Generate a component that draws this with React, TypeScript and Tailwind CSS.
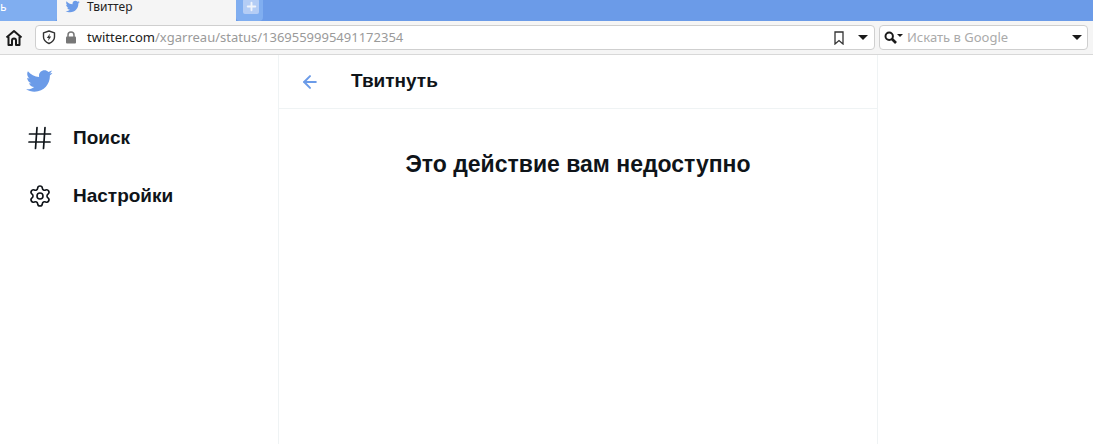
import { ArrowLeft, Settings, Plus } from "lucide-react";

const birdPath =
  "M23.643 4.937c-.835.37-1.732.62-2.675.733.962-.576 1.7-1.49 2.048-2.578-.9.534-1.897.922-2.958 1.13-.85-.904-2.06-1.47-3.4-1.47-2.572 0-4.658 2.086-4.658 4.66 0 .364.042.718.12 1.06-3.873-.195-7.304-2.05-9.602-4.868-.4.69-.63 1.49-.63 2.342 0 1.616.823 3.043 2.072 3.878-.764-.025-1.482-.234-2.11-.583v.06c0 2.257 1.605 4.14 3.737 4.568-.392.106-.803.162-1.227.162-.3 0-.593-.028-.877-.082.593 1.85 2.313 3.198 4.352 3.234-1.595 1.25-3.604 1.995-5.786 1.995-.376 0-.747-.022-1.112-.065 2.062 1.323 4.51 2.093 7.14 2.093 8.57 0 13.255-7.098 13.255-13.254 0-.2-.005-.402-.014-.602.91-.658 1.7-1.477 2.323-2.41z";

function Bird({ className }: { className: string }) {
  return (
    <svg viewBox="0 0 24 24" className={className} fill="currentColor">
      <path d={birdPath} />
    </svg>
  );
}

function Caret() {
  return <span className="block w-0 h-0 border-x-[5px] border-x-transparent border-t-[5px] border-t-[#1a1a1a] shrink-0" />;
}

function TabBar() {
  return (
    <div className="h-[21px] bg-[#6b9be8] flex font-['Noto_Sans',sans-serif] overflow-hidden shrink-0">
      <div className="w-[57px] bg-[#80aef0] text-white text-[12px] leading-[13px] rounded-br-[3px] overflow-hidden">ь</div>
      <div className="w-[179px] bg-[#f5f5f5] flex items-start pl-[8px] gap-[7px]">
        <Bird className="w-[15px] h-[15px] text-[#6b9be8] -mt-[1px]" />
        <span className="text-[12px] leading-[14px] text-[#222]">Твиттер</span>
      </div>
      <div className="w-[27px] bg-[#80aef0] rounded-b-[4px] flex items-start pl-[7px]">
        <span className="w-[16px] h-[15px] -mt-px bg-[#b4cdf5] rounded-[2px] flex items-center justify-center">
          <Plus className="w-[13px] h-[13px] text-[#f0f4fb]" strokeWidth={3.5} />
        </span>
      </div>
    </div>
  );
}

function Toolbar() {
  return (
    <div className="h-[34px] bg-[#f5f5f5] border-b border-[#d8d8d8] flex items-center pl-[5px] pr-[5px] font-['Noto_Sans',sans-serif] shrink-0">
      <svg viewBox="0 0 18 18" className="w-[18px] h-[18px] text-[#1a1a1a] mr-[12px]" fill="none" stroke="currentColor" strokeWidth={2} strokeLinejoin="round">
        <path d="M1.5 8.5 9 2l7.500 6.500" />
        <path d="M3.500 7.500V16H7v-4.500a2 2 0 0 1 4 0V16h3.500V7.500" />
      </svg>
      <div className="w-[840px] h-[25px] bg-white border border-[#cfcfcf] rounded-[4px] flex items-center pl-[6px] pr-[6px]">
        <svg viewBox="0 0 14 15" className="w-[14px] h-[15px] mr-[9px]" fill="none">
          <path d="M7 1 1.500 2.800v4.200c0 3.200 2.400 5.200 5.500 6.500 3.100-1.300 5.500-3.300 5.500-6.500V2.800z" stroke="#333" strokeWidth={1.400} strokeLinejoin="round" />
          <path d="M8 3.500 4.800 8h1.900L6 11l3.200-4.500H7.300z" fill="#333" />
        </svg>
        <svg viewBox="0 0 12 13" className="w-[12px] h-[13px] mr-[10px]" fill="none">
          <path d="M3 6V4a3 3 0 0 1 6 0v2" stroke="#777" strokeWidth={1.500} />
          <rect x="1" y="5.500" width="10" height="7" rx="1" fill="#777" />
        </svg>
        <span className="text-[13px] text-[#222]">twitter.com</span>
        <span className="text-[13px] text-[#9a9a9a]">/xgarreau/status/1369559995491172354</span>
        <svg viewBox="0 0 10 14" className="w-[10px] h-[14px] ml-auto mr-[14px]" fill="none">
          <path d="M1 1h8v12L5 9.500 1 13z" stroke="#333" strokeWidth={1.300} />
        </svg>
        <Caret />
      </div>
      <div className="ml-[4px] w-[209px] h-[25px] bg-white border border-[#cfcfcf] rounded-[4px] flex items-center pl-[4px] pr-[5px]">
        <svg viewBox="0 0 13 13" className="w-[13px] h-[13px]" fill="none" stroke="#1a1a1a">
          <circle cx="5.200" cy="5.200" r="3.700" strokeWidth={2} />
          <path d="m8 8 4 4" strokeWidth={2.600} />
        </svg>
        <span className="w-0 h-0 border-x-[3px] border-x-transparent border-t-[3px] border-t-[#1a1a1a] mr-[4px] mb-[4px]" />
        <span className="text-[13px] text-[#aaaaaa]">Искать в Google</span>
        <span className="ml-auto">
          <Caret />
        </span>
      </div>
    </div>
  );
}

function NavItem({ icon, label }: { icon: React.ReactNode; label: string }) {
  return (
    <div className="h-[58px] flex items-center pl-[28px] gap-[21px]">
      {icon}
      <span className="text-[19px] font-bold text-[#0f1419]">{label}</span>
    </div>
  );
}

export default function App() {
  return (
    <div className="w-[1093px] h-[445px] bg-white flex flex-col overflow-hidden font-['Liberation_Sans',sans-serif]">
      <TabBar />
      <Toolbar />
      <div className="flex h-[389px]">
        <div className="w-[278px]">
          <Bird className="w-[28px] h-[28px] text-[#6b9be8] ml-[25px] mt-[12px]" />
          <div className="mt-[14px]">
            <NavItem
              icon={
                <svg viewBox="0 0 24 24" className="w-[24px] h-[24px] text-[#0f1419]" fill="none" stroke="currentColor" strokeWidth={1.700} strokeLinecap="round">
                  <path d="M1.500 8h21M1 16h21M9 1.500 7.500 22.500M17 1.500 15.500 22.500" />
                </svg>
              }
              label="Поиск"
            />
            <NavItem icon={<Settings className="w-[24px] h-[24px] text-[#0f1419]" strokeWidth={1.600} />} label="Настройки" />
          </div>
        </div>
        <div className="w-[600px] border-x border-[#eff3f4]">
          <div className="h-[54px] border-b border-[#eff3f4] flex items-center pl-[21px] gap-[31px]">
            <ArrowLeft className="w-[20px] h-[20px] text-[#6b9be8]" strokeWidth={2.400} />
            <span className="text-[19px] font-bold text-[#0f1419]">Твитнуть</span>
          </div>
          <p className="mt-[38px] text-center text-[23px] font-bold text-[#0f1419]">Это действие вам недоступно</p>
        </div>
      </div>
    </div>
  );
}
